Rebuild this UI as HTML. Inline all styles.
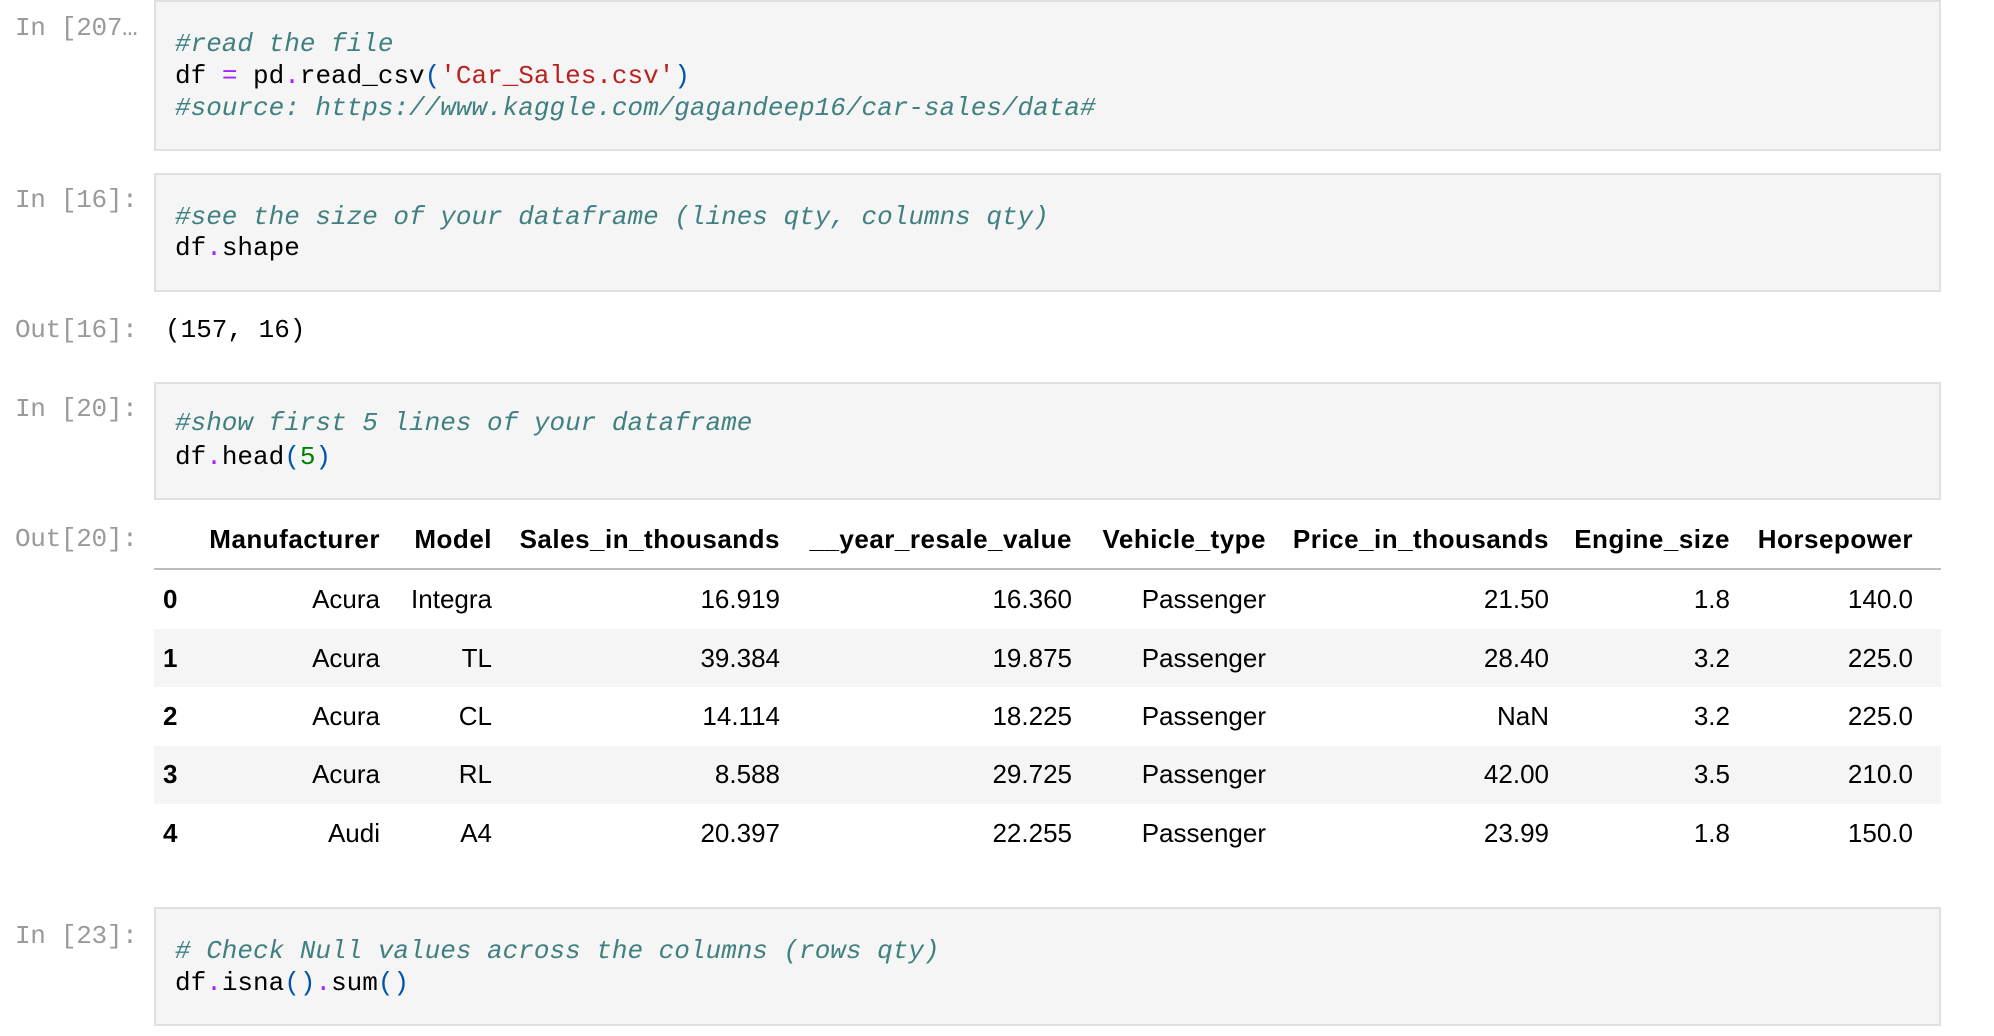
<!DOCTYPE html>
<html><head><meta charset="utf-8"><style>
body{margin:0;width:1994px;height:1036px;background:#fff;position:relative;overflow:hidden;font-family:"Liberation Mono",monospace;}
.p{position:absolute;left:15px;font-size:26px;line-height:33px;color:#9a9a9a;font-family:"Liberation Mono",monospace;letter-spacing:-0.3px}
.box{position:absolute;left:154px;width:1787px;background:#f5f5f5;border:2px solid #e0e0e0;box-sizing:border-box}
.l{position:absolute;left:175px;font-size:26px;line-height:33px;color:#000;white-space:pre}
.c{color:#408080;font-style:italic}
.s{color:#ba2121}.o{color:#aa22ff}.b{color:#0055aa}.n{color:#008000}
.t{position:absolute;font-family:"Liberation Sans",sans-serif;font-size:26px;line-height:33px;color:#000;text-align:right;white-space:nowrap}
.h{font-weight:bold;letter-spacing:0.5px}
.stripe{position:absolute;left:154px;width:1787px;height:58px;background:#f5f5f5}
</style></head><body>
<div class="box" style="top:0;height:151px"></div>
<div class="p" style="top:12px">In [207…</div>
<div class="l" style="top:28px"><span class="c">#read the file</span></div>
<div class="l" style="top:60px">df <span class="o">=</span> pd<span class="o">.</span>read_csv<span class="b">(</span><span class="s">'Car_Sales.csv'</span><span class="b">)</span></div>
<div class="l" style="top:92px"><span class="c">#source: https://www.kaggle.com/gagandeep16/car-sales/data#</span></div>

<div class="box" style="top:173px;height:119px"></div>
<div class="p" style="top:184px">In [16]:</div>
<div class="l" style="top:201px"><span class="c">#see the size of your dataframe (lines qty, columns qty)</span></div>
<div class="l" style="top:232px">df<span class="o">.</span>shape</div>

<div class="p" style="top:314px">Out[16]:</div>
<div class="l" style="top:314px;left:165px">(157, 16)</div>

<div class="box" style="top:382px;height:118px"></div>
<div class="p" style="top:393px">In [20]:</div>
<div class="l" style="top:407px"><span class="c">#show first 5 lines of your dataframe</span></div>
<div class="l" style="top:441px">df<span class="o">.</span>head<span class="b">(</span><span class="n">5</span><span class="b">)</span></div>

<div class="p" style="top:523px">Out[20]:</div>
<div style="position:absolute;left:154px;top:568px;width:1787px;height:2px;background:#bdbdbd"></div>
<div class="stripe" style="top:629px"></div>
<div class="stripe" style="top:746px"></div>

<div class="t h" style="top:523px;right:1614px">Manufacturer</div>
<div class="t h" style="top:523px;right:1502px">Model</div>
<div class="t h" style="top:523px;right:1214px">Sales_in_thousands</div>
<div class="t h" style="top:523px;right:922px">__year_resale_value</div>
<div class="t h" style="top:523px;right:728px">Vehicle_type</div>
<div class="t h" style="top:523px;right:445px">Price_in_thousands</div>
<div class="t h" style="top:523px;right:264px">Engine_size</div>
<div class="t h" style="top:523px;right:81px">Horsepower</div>

<div class="t h" style="top:583px;left:163px">0</div>
<div class="t" style="top:583px;right:1614px">Acura</div>
<div class="t" style="top:583px;right:1502px">Integra</div>
<div class="t" style="top:583px;right:1214px">16.919</div>
<div class="t" style="top:583px;right:922px">16.360</div>
<div class="t" style="top:583px;right:728px">Passenger</div>
<div class="t" style="top:583px;right:445px">21.50</div>
<div class="t" style="top:583px;right:264px">1.8</div>
<div class="t" style="top:583px;right:81px">140.0</div>

<div class="t h" style="top:642px;left:163px">1</div>
<div class="t" style="top:642px;right:1614px">Acura</div>
<div class="t" style="top:642px;right:1502px">TL</div>
<div class="t" style="top:642px;right:1214px">39.384</div>
<div class="t" style="top:642px;right:922px">19.875</div>
<div class="t" style="top:642px;right:728px">Passenger</div>
<div class="t" style="top:642px;right:445px">28.40</div>
<div class="t" style="top:642px;right:264px">3.2</div>
<div class="t" style="top:642px;right:81px">225.0</div>

<div class="t h" style="top:700px;left:163px">2</div>
<div class="t" style="top:700px;right:1614px">Acura</div>
<div class="t" style="top:700px;right:1502px">CL</div>
<div class="t" style="top:700px;right:1214px">14.114</div>
<div class="t" style="top:700px;right:922px">18.225</div>
<div class="t" style="top:700px;right:728px">Passenger</div>
<div class="t" style="top:700px;right:445px">NaN</div>
<div class="t" style="top:700px;right:264px">3.2</div>
<div class="t" style="top:700px;right:81px">225.0</div>

<div class="t h" style="top:758px;left:163px">3</div>
<div class="t" style="top:758px;right:1614px">Acura</div>
<div class="t" style="top:758px;right:1502px">RL</div>
<div class="t" style="top:758px;right:1214px">8.588</div>
<div class="t" style="top:758px;right:922px">29.725</div>
<div class="t" style="top:758px;right:728px">Passenger</div>
<div class="t" style="top:758px;right:445px">42.00</div>
<div class="t" style="top:758px;right:264px">3.5</div>
<div class="t" style="top:758px;right:81px">210.0</div>

<div class="t h" style="top:817px;left:163px">4</div>
<div class="t" style="top:817px;right:1614px">Audi</div>
<div class="t" style="top:817px;right:1502px">A4</div>
<div class="t" style="top:817px;right:1214px">20.397</div>
<div class="t" style="top:817px;right:922px">22.255</div>
<div class="t" style="top:817px;right:728px">Passenger</div>
<div class="t" style="top:817px;right:445px">23.99</div>
<div class="t" style="top:817px;right:264px">1.8</div>
<div class="t" style="top:817px;right:81px">150.0</div>

<div class="box" style="top:907px;height:119px"></div>
<div class="p" style="top:920px">In [23]:</div>
<div class="l" style="top:935px"><span class="c"># Check Null values across the columns (rows qty)</span></div>
<div class="l" style="top:967px">df<span class="o">.</span>isna<span class="b">()</span><span class="o">.</span>sum<span class="b">()</span></div>
</body></html>
